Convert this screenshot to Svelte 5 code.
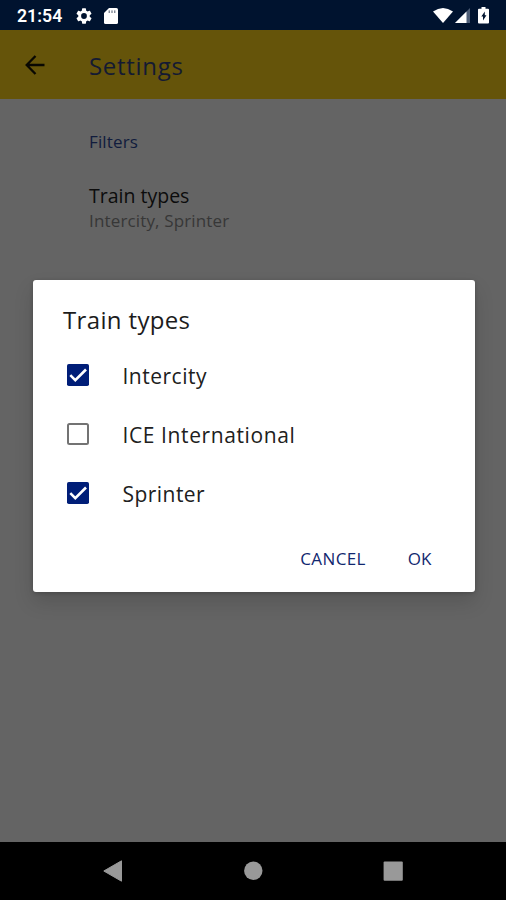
<script>
  let trainTypes = $state([
    { name: 'Intercity', checked: true, spacing: 0.5 },
    { name: 'ICE International', checked: false, spacing: 0.6 },
    { name: 'Sprinter', checked: true, spacing: 0.45 }
  ]);
  let open = $state(true);
  let summary = $derived(trainTypes.filter((t) => t.checked).map((t) => t.name).join(', '));
</script>

<div class="screen">
  <header class="status">
    <span class="time">21:54</span>
    <svg class="gear" viewBox="2 2 20 20"><path fill="#fff" d="M19.14 12.94c.04-.3.06-.61.06-.94s-.02-.64-.07-.94l2.03-1.58a.49.49 0 0 0 .12-.61l-1.92-3.32a.49.49 0 0 0-.59-.22l-2.39.96a7 7 0 0 0-1.62-.94l-.36-2.54a.48.48 0 0 0-.48-.41h-3.84a.47.47 0 0 0-.47.41l-.36 2.54c-.59.24-1.13.57-1.62.94l-2.39-.96a.48.48 0 0 0-.59.22L2.74 8.87a.47.47 0 0 0 .12.61l2.03 1.58a7 7 0 0 0 0 1.88l-2.03 1.58a.49.49 0 0 0-.12.61l1.92 3.32c.12.22.37.29.59.22l2.39-.96c.5.38 1.03.7 1.62.94l.36 2.54c.05.24.24.41.48.41h3.84c.24 0 .44-.17.47-.41l.36-2.54c.59-.24 1.13-.56 1.62-.94l2.39.96c.22.08.47 0 .59-.22l1.92-3.32a.47.47 0 0 0-.12-.61zM12 15.6a3.6 3.6 0 1 1 0-7.2 3.6 3.6 0 0 1 0 7.2z"/></svg>
    <svg class="card" viewBox="0 0 14 16"><path fill="#fff" d="M5 0h7.4A1.6 1.6 0 0 1 14 1.6v12.8a1.6 1.6 0 0 1-1.6 1.6H1.6A1.6 1.6 0 0 1 0 14.400V5z"/><path stroke="#00132f" stroke-opacity=".7" stroke-width="1" d="M5.200 2.400v2.600M8 2.400v2.600M10.800 2.400v2.600"/></svg>
    <svg class="signals" viewBox="0 0 58 18">
      <path fill="#fff" d="M0 4.500Q10 -2.500 20 4.500L10 16z"/>
      <path fill="#4d5d76" d="M37 1v15H22z"/>
      <path fill="#fff" d="M33.500 4.500V16H22z"/>
      <path fill="#fff" d="M48.500 0h4v1.800h2.500a1 1 0 0 1 1 1V15.500a1 1 0 0 1-1 1h-9a1 1 0 0 1-1-1V2.800a1 1 0 0 1 1-1h2.500z"/>
      <path fill="#00132f" d="M51.800 4.500v3.700H53.500L50 13.500v-4H48.300z"/>
    </svg>
  </header>

  <div class="toolbar">
    <svg class="back" viewBox="0 0 20 20"><path fill="none" stroke="#090802" stroke-width="2.300" d="M19.500 10H2M10.500 1L1.700 10l8.800 9"/></svg>
    <h1>Settings</h1>
  </div>

  <main>
    <div class="section">Filters</div>
    <div class="pref">Train types</div>
    <div class="summary">{summary}</div>
  </main>

  <nav>
    <svg viewBox="0 0 20 22"><path fill="#999" d="M18.500.8v20.400L.8 11z" stroke="#999" stroke-linejoin="round"/></svg>
    <svg viewBox="0 0 20 22"><circle cx="10.300" cy="10.800" r="9.200" fill="#999"/></svg>
    <svg viewBox="0 0 20 22"><rect x=".6" y="1.500" width="19.200" height="19.200" rx="1" fill="#999"/></svg>
  </nav>

  {#if open}
    <div class="dialog" role="dialog" aria-label="Train types">
      <h2>Train types</h2>
      {#each trainTypes as type}
        <label>
          <input type="checkbox" bind:checked={type.checked} />
          <svg class="box" viewBox="0 0 22 22">
            {#if type.checked}
              <rect width="22" height="22" rx="1.800" fill="#001e78"/>
              <path fill="none" stroke="#fff" stroke-width="2.600" d="M3.300 11.200l5 5L19 5.500"/>
            {:else}
              <rect x="1" y="1" width="20" height="20" rx="1.500" fill="#fff" stroke="#737373" stroke-width="2"/>
            {/if}
          </svg>
          <span style="letter-spacing: {type.spacing}px">{type.name}</span>
        </label>
      {/each}
      <div class="actions">
        <button class="cancel" onclick={() => (open = false)}>CANCEL</button>
        <button class="ok" onclick={() => (open = false)}>OK</button>
      </div>
    </div>
  {/if}
</div>

<style>
  :global(body) { margin: 0; }
  .screen {
    position: relative;
    width: 506px;
    height: 900px;
    display: flex;
    flex-direction: column;
    overflow: hidden;
    background: #646464;
    font-family: "Open Sans", "Noto Sans", sans-serif;
  }
  svg { display: block; flex: none; }
  .status {
    box-sizing: border-box;
    height: 29.5px;
    padding: 2px 15px 0 17px;
    display: flex;
    align-items: center;
    background: #00132f;
  }
  .time { width: 59px; color: #fff; font: 600 17.700px/28px Roboto, sans-serif; }
  .gear { width: 16px; height: 16px; }
  .card { width: 14px; height: 16px; margin-left: 12px; }
  .signals { width: 58px; height: 18px; margin-left: auto; }
  .toolbar {
    height: 69px;
    padding-left: 25px;
    display: flex;
    align-items: center;
    background: #65540a;
  }
  .back { width: 20px; height: 20px; margin: 1px 44px 0 0; }
  h1, h2 { margin: 0; font-weight: 400; font-size: 24px; }
  h1 { color: #141a32; line-height: 36px; padding-top: 4px; letter-spacing: .7px; }
  main { flex: 1; padding-left: 89px; padding-top: 30px; }
  .section { color: #111c3d; font-size: 17px; line-height: 26px; font-weight: 500; letter-spacing: .15px; }
  .pref { margin-top: 27px; color: #0c0c0c; font-size: 19.5px; line-height: 28px; }
  .summary { margin-top: -1px; color: #373737; font-size: 17px; line-height: 24px; letter-spacing: .15px; }
  nav {
    height: 58.500px;
    display: flex;
    justify-content: space-between;
    align-items: center;
    padding: 0 103px;
    background: #000;
    box-sizing: border-box;
  }
  nav svg { width: 20px; height: 22px; }
  .dialog {
    position: absolute;
    left: 33px;
    top: 280px;
    width: 441.500px;
    height: 311.500px;
    box-sizing: border-box;
    padding: 22px 0 0 30px;
    background: #fff;
    border-radius: 3px;
    box-shadow: 0 10px 20px rgba(0, 0, 0, .14), 0 1px 4px rgba(0, 0, 0, .2);
  }
  h2 { color: #1c1c1c; line-height: 36px; height: 43px; letter-spacing: .35px; }
  label {
    height: 59px;
    display: flex;
    align-items: center;
    color: #202020;
    font-size: 21px;
    line-height: 30px;
  }
  input { appearance: none; width: 0; height: 0; margin: 0; }
  .box { width: 22px; height: 22px; margin: 0 33.500px 0 4px; }
  label span { padding-top: 2px; }
  .actions { display: flex; justify-content: flex-end; padding: 24px 43px 0 0; gap: 42px; }
  button { border: 0; padding: 0; background: none; color: #11276f; font: 17px/26px "Open Sans", sans-serif; }
  .cancel { letter-spacing: .4px; }
</style>
